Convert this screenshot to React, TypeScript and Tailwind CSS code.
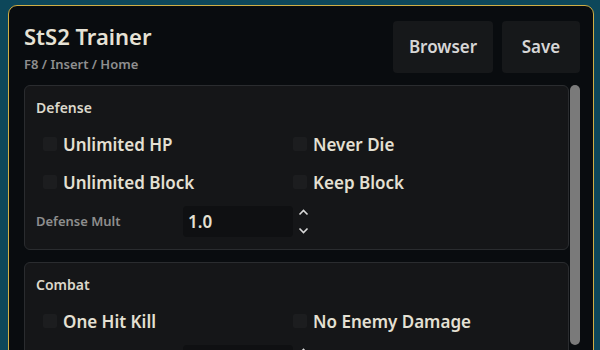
const font = { fontFamily: '"Noto Sans", "Open Sans", sans-serif' };

const Check = ({ label }: { label: string }) => (
  <div className="flex items-center h-[38px]">
    <span className="w-[14px] h-[14px] ml-[7px] mr-[6px] rounded-[2px] bg-[#1c1d1f]" />
    <span className="text-[17px] leading-[23px] font-semibold text-[#e4e0d3]">{label}</span>
  </div>
);

const Spinner = () => (
  <div className="flex flex-col items-center ml-[5px] gap-[11px]">
    <svg width="11" height="7" viewBox="0 0 11 7">
      <path d="M1.5 5.5 L5.5 1.5 L9.5 5.5" fill="none" stroke="#d9d9d9" strokeWidth="1.6" />
    </svg>
    <svg width="11" height="7" viewBox="0 0 11 7">
      <path d="M1.5 1.5 L5.5 5.5 L9.5 1.5" fill="none" stroke="#d9d9d9" strokeWidth="1.6" />
    </svg>
  </div>
);

const MultRow = ({ label, value }: { label: string; value: string }) => (
  <div className="flex items-center h-[31px] mt-[5px]">
    <span className="w-[147px] text-[13px] font-semibold text-[#8e8e8e]">{label}</span>
    <div className="w-[110px] h-[31px] rounded-[4px] bg-[#0f1012] flex items-center px-[5px] text-[17px] font-semibold text-[#e4e0d3]">
      {value}
    </div>
    <Spinner />
  </div>
);

const Section = ({ title, rows, mult }: { title: string; rows: string[][]; mult: [string, string] }) => (
  <div className="rounded-[6px] border border-[#2a2c2f] bg-[#151618] px-[11px] pt-[12px] pb-[12px]">
    <div className="text-[14px] leading-[19px] font-semibold text-[#dcd8cb]">{title}</div>
    <div className="mt-[8px]">
      {rows.map((r) => (
        <div key={r[0]} className="grid grid-cols-[250px_1fr]">
          <Check label={r[0]} />
          <Check label={r[1]} />
        </div>
      ))}
    </div>
    <MultRow label={mult[0]} value={mult[1]} />
  </div>
);

export default function App() {
  return (
    <div className="w-[600px] h-[350px] overflow-hidden bg-[#0d475a] pt-[5px] pl-[8px]" style={font}>
      <div className="w-[586px] h-[380px] rounded-[9px] border border-[#cfae45] bg-[#090c0f] pl-[15px] pr-[13px] pt-[15px]">
        <div className="flex justify-between">
          <div>
            <div className="text-[22px] leading-[30px] font-semibold text-[#e6e2d5]">StS2 Trainer</div>
            <div className="mt-[4px] text-[13px] leading-[18px] font-semibold text-[#8f8f8f]">F8 / Insert / Home</div>
          </div>
          <div className="flex gap-[9px]">
            <button className="w-[100px] h-[52px] rounded-[4px] bg-[#16181a] text-[17px] font-semibold text-[#d6d6d6]">Browser</button>
            <button className="w-[78px] h-[52px] rounded-[4px] bg-[#16181a] text-[17px] font-semibold text-[#d6d6d6]">Save</button>
          </div>
        </div>
        <div className="mt-[12px] flex gap-[1px]">
          <div className="w-[545px] flex flex-col gap-[12px]">
            <Section
              title="Defense"
              rows={[["Unlimited HP", "Never Die"], ["Unlimited Block", "Keep Block"]]}
              mult={["Defense Mult", "1.0"]}
            />
            <Section
              title="Combat"
              rows={[["One Hit Kill", "No Enemy Damage"]]}
              mult={["Damage Mult", "1.0"]}
            />
          </div>
          <div className="w-[10px] h-[260px] rounded-full bg-[#7a7a7a]" />
        </div>
      </div>
    </div>
  );
}
